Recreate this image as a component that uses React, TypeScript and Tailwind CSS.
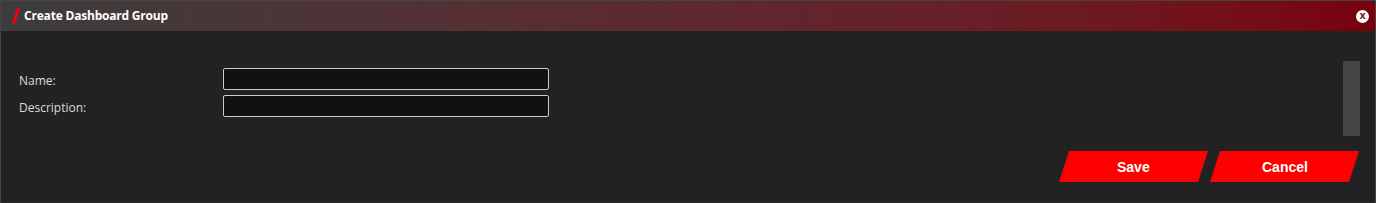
import React from "react";

export default function App() {
  return (
    <div className="w-[1376px] h-[203px] bg-[#222222] border border-[#444444] border-b-[#2a2a2a] flex flex-col overflow-hidden" style={{ fontFamily: '"Open Sans", "Noto Sans", sans-serif' }}>
      <div className="h-[30px] shrink-0 flex items-center bg-gradient-to-r from-[#3c3c3c] via-[#5e2831] to-[#78000f] rounded-tr-[4px] pl-[10px] pr-[6px]">
        <svg width="10" height="20" viewBox="0 0 10 20" className="shrink-0">
          <line x1="7.5" y1="2" x2="2.5" y2="18" stroke="#ff0000" strokeWidth="2.6" strokeLinecap="butt" />
        </svg>
        <span className="ml-[3px] text-white font-bold text-[12px] tracking-[-0.2px]">Create Dashboard Group</span>
        <div className="ml-auto w-[13px] h-[13px] rounded-full bg-white flex items-center justify-center">
          <span className="text-[#6a0010] font-bold text-[11px] leading-none -mt-[1px]" style={{ fontFamily: '"Liberation Sans", Arial, sans-serif' }}>x</span>
        </div>
      </div>
      <div className="flex pt-[30px] pr-[15px]">
        <div className="flex-1 pt-[7px] pl-[18px] flex flex-col gap-[5px]">
          <div className="flex items-center h-[22px]">
            <label className="w-[204px] pt-[3px] text-[12px] text-[#dddddd]">Name:</label>
            <input className="w-[326px] h-[22px] bg-[#111111] border border-[#cccccc] rounded-[2px] outline-none text-white text-[12px] px-1" />
          </div>
          <div className="flex items-center h-[22px]">
            <label className="w-[204px] pt-[3px] text-[12px] text-[#dddddd]">Description:</label>
            <input className="w-[326px] h-[22px] bg-[#111111] border border-[#cccccc] rounded-[2px] outline-none text-white text-[12px] px-1" />
          </div>
        </div>
        <div className="w-[17px] h-[75px] bg-[#444444]" />
      </div>
      <div className="flex justify-end gap-[12px] pr-[21px] mt-[15px]">
        <button className="w-[139px] h-[31px] bg-[#ff0000] -skew-x-[18deg] flex items-center justify-center">
          <span className="skew-x-[18deg] pt-[2px] text-white font-bold text-[14px]" style={{ fontFamily: '"Liberation Sans", Arial, sans-serif' }}>Save</span>
        </button>
        <button className="w-[139px] h-[31px] bg-[#ff0000] -skew-x-[18deg] flex items-center justify-center">
          <span className="skew-x-[18deg] pt-[2px] text-white font-bold text-[14px]" style={{ fontFamily: '"Liberation Sans", Arial, sans-serif' }}>Cancel</span>
        </button>
      </div>
    </div>
  );
}
